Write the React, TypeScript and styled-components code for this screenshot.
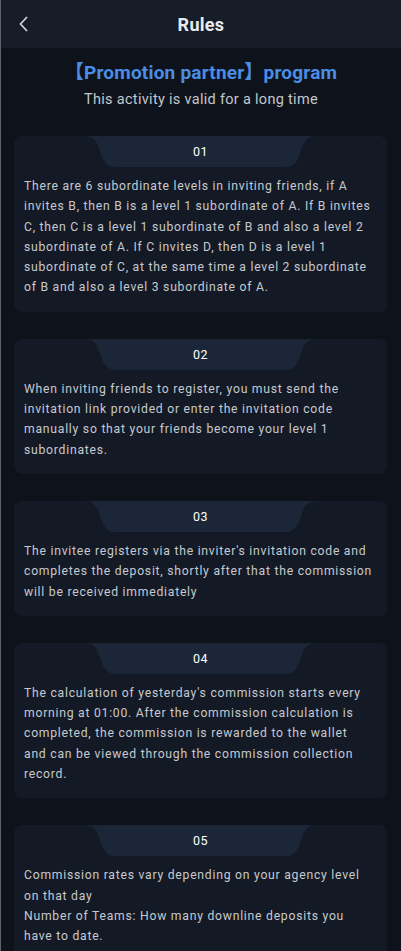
import React from "react"
import styled, { createGlobalStyle } from "styled-components"

// line breaks follow the original layout
const rules = [
  {
    no: "01",
    lines: [
      "There are 6 subordinate levels in inviting friends, if A",
      "invites B, then B is a level 1 subordinate of A. If B invites",
      "C, then C is a level 1 subordinate of B and also a level 2",
      "subordinate of A. If C invites D, then D is a level 1",
      "subordinate of C, at the same time a level 2 subordinate",
      "of B and also a level 3 subordinate of A.",
    ],
  },
  {
    no: "02",
    lines: [
      "When inviting friends to register, you must send the",
      "invitation link provided or enter the invitation code",
      "manually so that your friends become your level 1",
      "subordinates.",
    ],
  },
  {
    no: "03",
    lines: [
      "The invitee registers via the inviter's invitation code and",
      "completes the deposit, shortly after that the commission",
      "will be received immediately",
    ],
  },
  {
    no: "04",
    lines: [
      "The calculation of yesterday's commission starts every",
      "morning at 01:00. After the commission calculation is",
      "completed, the commission is rewarded to the wallet",
      "and can be viewed through the commission collection",
      "record.",
    ],
  },
  {
    no: "05",
    lines: [
      "Commission rates vary depending on your agency level",
      "on that day",
      "Number of Teams: How many downline deposits you",
      "have to date.",
    ],
  },
]

const GlobalStyle = createGlobalStyle`
  html, body {
    margin: 0;
    padding: 0;
    background: #0e131b;
  }
  body {
    font-family: Roboto, "Noto Sans", "Noto Sans CJK SC", sans-serif;
    -webkit-font-smoothing: antialiased;
  }
`

const Page = styled.div`
  min-height: 100vh;
  background: #0e131b;
  border-left: 1px solid #5d626b;
  overflow: hidden;
`

const Header = styled.header`
  height: 48px;
  background: #161c28;
  display: flex;
  align-items: center;
  justify-content: center;
  position: relative;
`

const BackButton = styled.button`
  position: absolute;
  left: 11px;
  top: 12px;
  width: 24px;
  height: 24px;
  padding: 0;
  border: 0;
  background: none;
  display: flex;
  align-items: center;
  justify-content: center;
  cursor: pointer;
`

const Title = styled.h1`
  margin: 0;
  color: #e8eaee;
  font-size: 18px;
  font-weight: 700;
  letter-spacing: 0.3px;
`

const Intro = styled.section`
  display: flex;
  flex-direction: column;
  align-items: center;
  padding: 12px 0 0;
`

const Heading = styled.h2`
  margin: 0;
  color: #4a8de6;
  font-size: 19px;
  font-weight: 700;
  line-height: 25px;
  letter-spacing: 0.2px;
`

const Subtitle = styled.p`
  margin: 5px 0 0;
  color: #c3c7ce;
  font-size: 14.5px;
  line-height: 20px;
  letter-spacing: 0.3px;
`

const List = styled.div`
  display: flex;
  flex-direction: column;
  gap: 27px;
  padding: 26px 14px 0 13px;
`

const Card = styled.article`
  background: #141a25;
  border-radius: 8px;
  padding: 0 8px 14px 10px;
  display: flex;
  flex-direction: column;
  align-items: center;
`

const Tab = styled.div`
  width: 232px;
  height: 31px;
  margin-left: -2px;
  background: #1b2738;
  clip-path: path(
    "M0 0 C9 0 12 5 15 13 C18 23 21 31 31 31 L201 31 C211 31 214 23 217 13 C220 5 223 0 232 0 Z"
  );
  display: flex;
  align-items: center;
  justify-content: center;
  color: #ffffff;
  font-size: 12.5px;
  letter-spacing: 0.5px;
`

const Body = styled.div`
  margin-top: 9px;
  align-self: stretch;
  color: #c6c9cf;
  font-size: 12.2px;
  line-height: 20.3px;
  letter-spacing: 0.75px;
`

const Line = styled.p`
  margin: 0;
  white-space: nowrap;
`

export default function App() {
  return (
    <>
      <GlobalStyle />
      <Page>
        <Header>
          <BackButton aria-label="Back">
            <svg width="12" height="16" viewBox="0 0 12 16" fill="none">
              <path d="M9 1 L2.5 8 L9 15" stroke="#d7dae0" strokeWidth="1.6" />
            </svg>
          </BackButton>
          <Title>Rules</Title>
        </Header>
        <Intro>
          <Heading>【Promotion partner】program</Heading>
          <Subtitle>This activity is valid for a long time</Subtitle>
        </Intro>
        <List>
          {rules.map(rule => (
            <Card key={rule.no}>
              <Tab>{rule.no}</Tab>
              <Body>
                {rule.lines.map((line, i) => (
                  <Line key={i}>{line}</Line>
                ))}
              </Body>
            </Card>
          ))}
        </List>
      </Page>
    </>
  )
}
